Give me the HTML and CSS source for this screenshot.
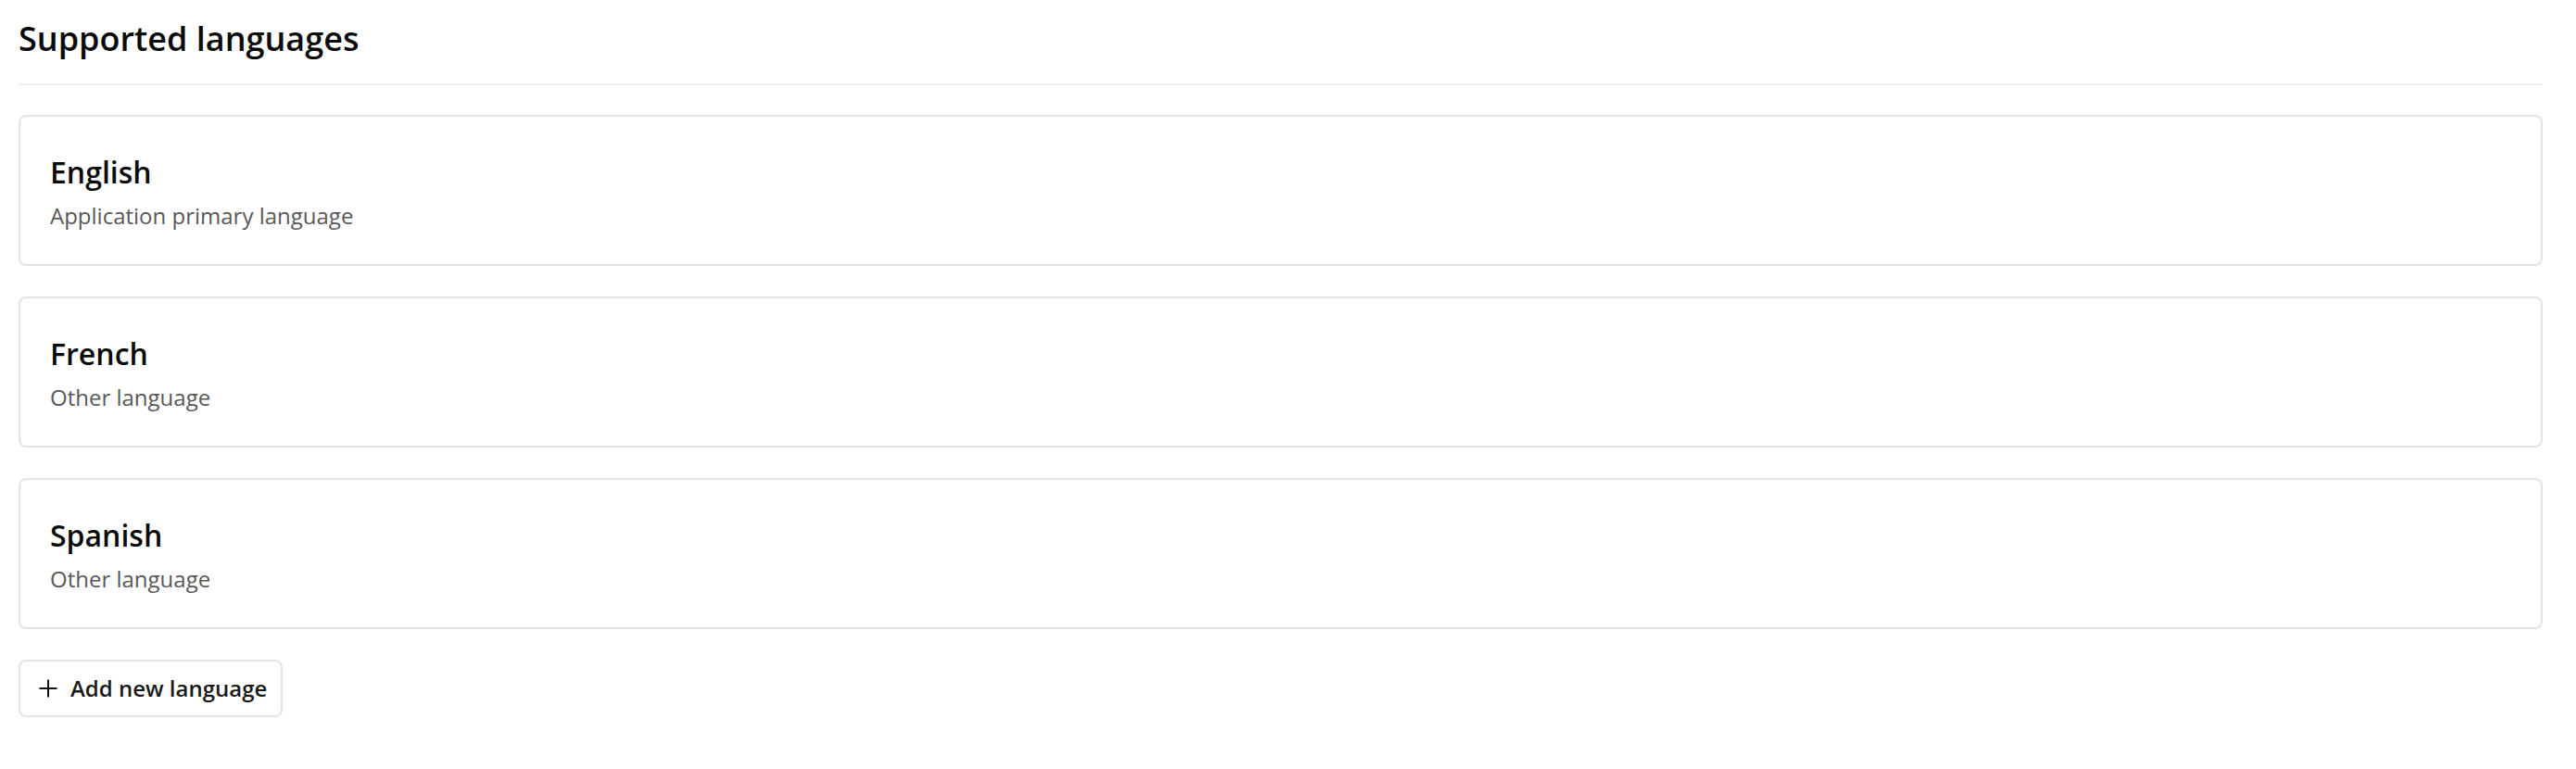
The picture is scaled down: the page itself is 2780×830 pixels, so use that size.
FILE: index.html
```html
<!DOCTYPE html>
<html lang="en">
<head>
<meta charset="utf-8">
<title>Supported languages</title>
<link rel="stylesheet" href="styles.css">
</head>
<body>
<main class="page">
  <h1 class="page-title">Supported languages</h1>
  <ul class="lang-list">
    <li class="lang-card">
      <div class="lang-name">English</div>
      <div class="lang-desc">Application primary language</div>
    </li>
    <li class="lang-card">
      <div class="lang-name">French</div>
      <div class="lang-desc">Other language</div>
    </li>
    <li class="lang-card">
      <div class="lang-name">Spanish</div>
      <div class="lang-desc">Other language</div>
    </li>
  </ul>
  <button class="add-btn" type="button">
    <svg class="add-icon" viewBox="0 0 24 24" width="24" height="24" aria-hidden="true">
      <path d="M12 2.5V21.5M2.5 12H21.5" fill="none" stroke="#111" stroke-width="2" stroke-linecap="butt"/>
    </svg>
    <span>Add new language</span>
  </button>
</main>
</body>
</html>
```

FILE: styles.css
```css
* {
  box-sizing: border-box;
}

html, body {
  margin: 0;
  padding: 0;
  background: #ffffff;
}

body {
  font-family: "Open Sans", "Noto Sans", "Liberation Sans", sans-serif;
  color: #0a0a0a;
}

.page {
  padding: 18px 36px 0 20px;
  display: flex;
  flex-direction: column;
  align-items: flex-start;
}

.page-title {
  align-self: stretch;
  margin: 0 0 32px 0;
  padding: 0 0 24px 0;
  font-size: 36px;
  line-height: 48px;
  font-weight: 600;
  color: #0a0a0a;
  border-bottom: 2px solid #efefef;
}

.lang-list {
  align-self: stretch;
  list-style: none;
  margin: 0 0 33px 0;
  padding: 0;
  display: flex;
  flex-direction: column;
  gap: 33px;
}

.lang-card {
  border: 2px solid #e4e4e4;
  border-radius: 8px;
  padding: 36px 32px 34px 32px;
  display: flex;
  flex-direction: column;
  gap: 5px;
  background: #fff;
}

.lang-name {
  font-size: 32px;
  line-height: 48px;
  font-weight: 600;
  color: #0a0a0a;
}

.lang-desc {
  font-size: 24px;
  line-height: 36px;
  font-weight: 400;
  color: #595959;
}

.add-btn {
  display: inline-flex;
  align-items: center;
  gap: 12px;
  height: 62px;
  padding: 0 15px 0 18px;
  border: 2px solid #e4e4e4;
  border-radius: 8px;
  background: #fff;
  font-family: inherit;
  font-size: 24px;
  line-height: 36px;
  font-weight: 600;
  color: #1a1a1a;
  cursor: pointer;
}

.add-icon {
  display: block;
  flex: none;
}
```
